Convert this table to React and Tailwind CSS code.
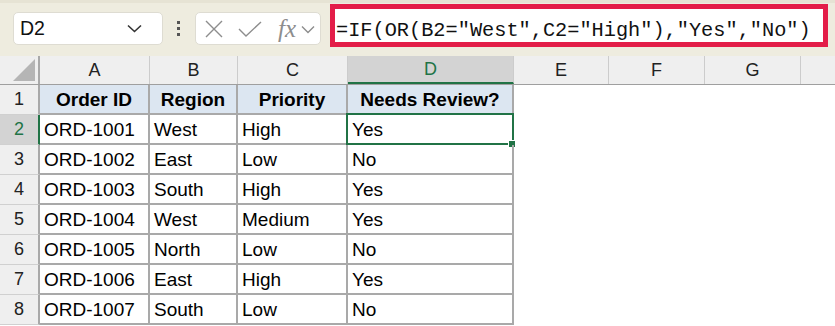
import React from 'react';

const rows = [
  ['ORD-1001', 'West', 'High', 'Yes'],
  ['ORD-1002', 'East', 'Low', 'No'],
  ['ORD-1003', 'South', 'High', 'Yes'],
  ['ORD-1004', 'West', 'Medium', 'Yes'],
  ['ORD-1005', 'North', 'Low', 'No'],
  ['ORD-1006', 'East', 'High', 'Yes'],
  ['ORD-1007', 'South', 'Low', 'No'],
];

const widths = ['w-[110px]', 'w-[88px]', 'w-[110px]', 'w-[166px]'];
const emptyWidths = ['w-[95px]', 'w-[96px]', 'w-[96px]'];

const Toolbar = () => (
  <div className="h-[56px] bg-[#eeecdf] border-t-[3px] border-[#e6e3d4] flex items-start">
    {/* Name box */}
    <div className="mt-[9px] ml-[13px] w-[150px] h-[33px] rounded-[5px] bg-white border border-[#dedcd2] flex items-center justify-between pl-[6px] pr-[20px]">
      <span className="text-[19.5px] leading-none text-[#111]">D2</span>
      <svg width="15" height="9" viewBox="0 0 15 9">
        <path d="M1 1.5 L7.5 7.5 L14 1.5" fill="none" stroke="#333" strokeWidth="1.6" />
      </svg>
    </div>

    {/* Dots */}
    <div className="mt-[18px] ml-[14px] flex flex-col gap-[3px]">
      <div className="w-[3px] h-[3px] bg-[#555]" />
      <div className="w-[3px] h-[3px] bg-[#555]" />
      <div className="w-[3px] h-[3px] bg-[#555]" />
    </div>

    {/* Cancel / Enter / fx */}
    <div className="mt-[9px] ml-[15px] w-[126px] h-[33px] rounded-[5px] bg-white border border-[#dedcd2] flex items-center pl-[9px]">
      <svg width="18" height="18" viewBox="0 0 18 18">
        <path d="M1 1 L17 17 M17 1 L1 17" stroke="#8d8d8d" strokeWidth="1.4" fill="none" />
      </svg>
      <svg className="ml-[15px]" width="24" height="16" viewBox="0 0 24 16">
        <path d="M1 8 L8 15 L23 1" stroke="#8d8d8d" strokeWidth="1.4" fill="none" />
      </svg>
      <span className="ml-[16px] font-['Liberation_Serif',serif] italic text-[25px] leading-none text-[#8d8d8d]">fx</span>
      <svg className="ml-[5px] mt-[2px]" width="14" height="9" viewBox="0 0 14 9">
        <path d="M1 1.5 L7 7.5 L13 1.5" fill="none" stroke="#8d8d8d" strokeWidth="1.4" />
      </svg>
    </div>

    {/* Formula bar */}
    <div className="mt-[1px] ml-[9px] w-[498px] h-[43px] border-[5px] border-[#e31d48] bg-white pl-[1px] pt-[11px]">
      <div className="font-['Liberation_Mono',monospace] text-[20.3px] leading-[21px] text-[#111] whitespace-pre">
        =IF(OR(B2="West",C2="High"),"Yes","No")
      </div>
    </div>
  </div>
);

const ColumnHeaders = () => (
  <div className="flex h-[29px] bg-[#efefef] border-b border-[#9f9f9f] text-[18px] text-[#222]">
    <div className="w-[40px] h-full border-r-2 border-[#a9a9a9] flex items-end justify-end pr-[3px] pb-[3px]">
      <svg width="22" height="22" viewBox="0 0 22 22">
        <path d="M22 0 L22 22 L0 22 Z" fill="#b5b5b5" />
      </svg>
    </div>
    {['A', 'B', 'C'].map((l, i) => (
      <div key={l} className={`${widths[i]} h-full border-r border-[#cccccc] flex items-center justify-center`}>
        {l}
      </div>
    ))}
    <div className="w-[166px] h-full bg-[#d3d3d3] border-r border-[#cccccc] border-b-2 border-b-[#217346] flex items-center justify-center text-[#217346]">
      D
    </div>
    {['E', 'F', 'G'].map((l, i) => (
      <div key={l} className={`${emptyWidths[i]} h-full border-r border-[#cccccc] flex items-center justify-center`}>
        {l}
      </div>
    ))}
    <div className="flex-1" />
  </div>
);

const Sheet = () => (
  <div className="bg-white">
    <ColumnHeaders />

    {/* Row 1: table header */}
    <div className="flex h-[30px] text-[19px]">
      <div className="w-[40px] bg-[#efefef] border-r-2 border-[#a9a9a9] border-b border-b-[#d0d0d0] flex items-center justify-center text-[18px] text-[#222]">1</div>
      {['Order ID', 'Region', 'Priority', 'Needs Review?'].map((h, i) => (
        <div key={h} className={`${widths[i]} bg-[#dce6f1] border-r-2 border-b-2 border-[#a9a9a9] flex items-center justify-center font-bold pt-[2px] text-black`}>
          {h}
        </div>
      ))}
    </div>

    {rows.map((r, ri) => {
      const selected = ri === 0;
      return (
        <div key={r[0]} className="flex h-[30px] text-[19px]">
          <div
            className={`w-[40px] border-r-2 border-b border-b-[#d0d0d0] flex items-center justify-center text-[18px] ${
              selected ? 'bg-[#d3d3d3] border-r-[#217346] text-[#217346]' : 'bg-[#efefef] border-r-[#a9a9a9] text-[#222]'
            }`}
          >
            {ri + 2}
          </div>
          {r.map((c, ci) => (
            <div
              key={ci}
              className={`${widths[ci]} relative border-r-2 border-b-2 border-[#a9a9a9] flex items-center pl-[4px] pt-[3px] text-black`}
            >
              {c}
              {selected && ci === 3 && (
                <>
                  <div className="absolute -left-[2px] -top-[2px] -right-[2px] -bottom-[2px] border-2 border-[#217346]" />
                  <div className="absolute -right-[3px] -bottom-[4px] w-[6px] h-[6px] bg-[#217346] outline outline-1 outline-white" />
                </>
              )}
            </div>
          ))}
        </div>
      );
    })}
  </div>
);

export default function App() {
  return (
    <div className="w-[835px] h-[326px] overflow-hidden bg-white font-['Liberation_Sans',Arial,sans-serif]">
      <Toolbar />
      <Sheet />
    </div>
  );
}
